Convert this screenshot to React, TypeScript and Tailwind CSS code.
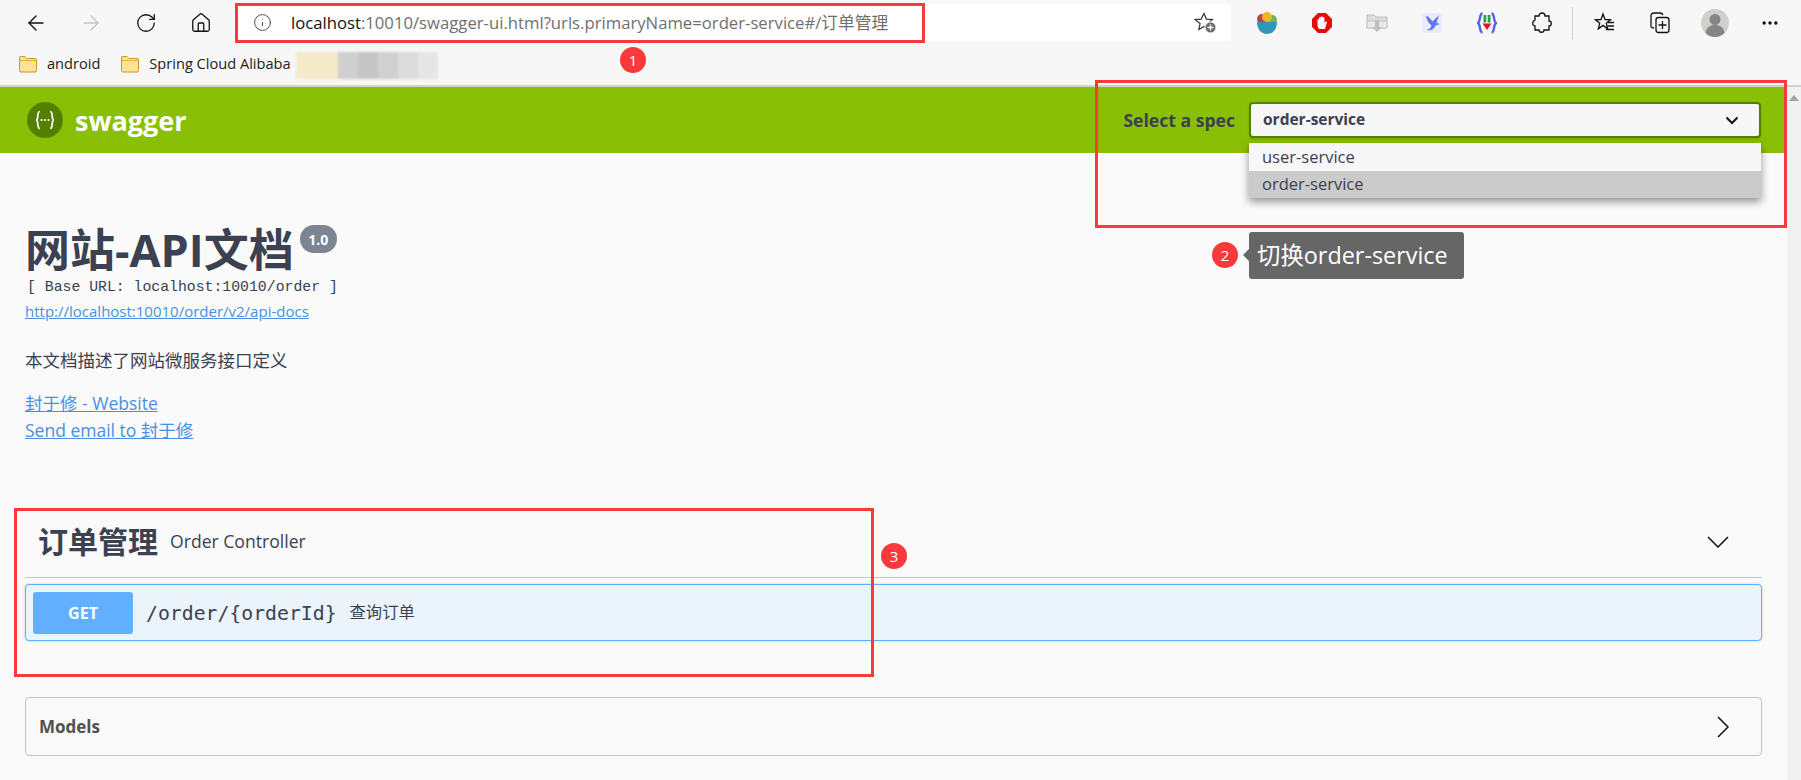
import { ArrowLeft, ArrowRight, RotateCw, Home, Info, MoreHorizontal } from "lucide-react";

const mono = "font-['Liberation_Mono','Noto_Sans_CJK_SC',monospace]";
const pathMono = "font-['DejaVu_Sans_Mono','Noto_Sans_CJK_SC',monospace]";

function BowlIcon() {
  return (
    <svg width="22" height="24" viewBox="0 0 22 24">
      <circle cx="6" cy="8" r="5" fill="#b5454f" />
      <circle cx="16" cy="9" r="5" fill="#6cb65a" />
      <circle cx="11" cy="6" r="5" fill="#f3b520" />
      <path d="M1 11h20c0 7-4 12-10 12S1 18 1 11z" fill="#2f97b8" />
    </svg>
  );
}

function StopIcon() {
  return (
    <svg width="22" height="22" viewBox="0 0 22 22">
      <path d="M7 1h8l6 6v8l-6 6H7l-6-6V7z" fill="#e60b0b" />
      <path d="M6.500 12V8c0-1.200 1.600-1.200 1.600 0V6c0-1.300 1.700-1.300 1.700 0v-.8c0-1.300 1.900-1.300 1.900 0V6c0-1.300 1.700-1.300 1.700 0v5l1-1.200c1-1 2 0 1.400 1L14 17H9c-1.600 0-2.500-2-2.500-5z" fill="#fff" />
    </svg>
  );
}

function FolderDownIcon() {
  return (
    <svg width="22" height="20" viewBox="0 0 22 20">
      <path d="M1 2h7l2 2h11v11H1z" fill="#dcdcdc" stroke="#bdbdbd" />
      <path d="M1 8h20v7H1z" fill="#e9e9e9" stroke="#c4c4c4" />
      <path d="M9 7h4v7h3l-5 5-5-5h3z" fill="#bfbfbf" />
    </svg>
  );
}

function BirdIcon() {
  return (
    <svg width="20" height="20" viewBox="0 0 20 20">
      <rect width="20" height="20" rx="2" fill="#e8ecfc" />
      <path d="M4 2.500c3 1.500 5 4 6.500 6l6.500-6.500-2.500 8 3.500 1-4.500 1.500C12 17 8 18 4.500 17c3-1 4.500-2.500 5-4.500C6.500 10 4.500 7 4 2.500z" fill="#5f78f2" />
    </svg>
  );
}

function BracesIcon() {
  return (
    <svg width="20" height="22" viewBox="0 0 20 22">
      <path d="M5.500 1.500C2 1.500 4 9 1 11c3 2 1 9.500 4.500 9.500M14.500 1.500c3.500 0 1.500 7.500 4.500 9.500-3 2-1 9.500-4.500 9.500" fill="none" stroke="#5560e8" strokeWidth="2.400" />
      <path d="M6.500 3h2.800v7.500H6.500zM10.700 3h2.800v7.500h-2.800z" fill="#22a34a" />
      <path d="M5.500 11.500h9L10 18z" fill="#e8102a" />
    </svg>
  );
}

function PuzzleIcon() {
  return (
    <svg width="20" height="22" viewBox="0 0 20 22" fill="none" stroke="#111" strokeWidth="1.300">
      <path d="M7 4c0-4 6-4 6 0h4v5c3 0 3 5 0 5v4h-5c0 3-5 3-5 0H3v-4c-3 0-3-5 0-6V4z" />
    </svg>
  );
}

function StarPlus() {
  return (
    <svg width="24" height="24" viewBox="0 0 24 24">
      <path d="M10 2.500l2.400 5.600 6 .5-4.500 4 1.300 6-5.200-3.100-5.200 3.100 1.300-6L1.100 8.600l6-.5z" fill="none" stroke="#333" strokeWidth="1.200" />
      <circle cx="16.500" cy="16.500" r="5.500" fill="#6b6b6b" stroke="#fff" />
      <path d="M16.500 13.500v6M13.500 16.500h6" stroke="#fff" strokeWidth="1.300" />
    </svg>
  );
}

function FavoritesIcon() {
  return (
    <svg width="22" height="22" viewBox="0 0 22 22" fill="none" stroke="#111" strokeWidth="1.300">
      <path d="M9 2l2 5.500 5.500.3-4.200 3.500 1.400 5.500L9 13.400l-4.700 3.400 1.400-5.500L1.500 7.800 7 7.500z" />
      <path d="M14 10.500h6M13.500 14h6.500M12 17.500h8" />
    </svg>
  );
}

function CollectionsIcon() {
  return (
    <svg width="22" height="24" viewBox="0 0 22 24" fill="none" stroke="#111" strokeWidth="1.300">
      <path d="M5 17H4a2 2 0 0 1-2-2V5c0-2 1-3 3-3h6c1.500 0 2.500.6 3 2" />
      <rect x="7" y="6.500" width="13" height="15" rx="2.500" />
      <path d="M13.500 10v8M9.500 14h8" />
    </svg>
  );
}

function Avatar() {
  return (
    <svg width="28" height="28" viewBox="0 0 28 28">
      <circle cx="14" cy="14" r="14" fill="#cfcfcb" />
      <circle cx="14" cy="10.500" r="5.500" fill="#858585" />
      <path d="M4.500 24c1-6 5-8 9.500-8s8.500 2 9.500 8c-2.500 2.500-6 4-9.500 4s-7-1.500-9.500-4z" fill="#858585" />
    </svg>
  );
}

function Folder() {
  return (
    <svg width="20" height="18" viewBox="0 0 20 18">
      <path d="M1.500 3a1.500 1.500 0 0 1 1.500-1.500h4l2 2h8A1.500 1.500 0 0 1 18.500 5v10.500A1.500 1.500 0 0 1 17 17H3a1.500 1.500 0 0 1-1.500-1.500z" fill="#fbe39a" stroke="#c9962a" />
      <path d="M2 5.500h16" stroke="#e2b13c" />
    </svg>
  );
}

function SwaggerLogo() {
  return (
    <svg width="36" height="36" viewBox="0 0 36 36">
      <circle cx="18" cy="18" r="18" fill="#547f00" />
      <path d="M13 9.500c-3 0-2 6-2.500 7-.3.600-1 1.500-1.500 1.500.5 0 1.200.9 1.500 1.500.5 1-.5 7 2.500 7M23 9.500c3 0 2 6 2.500 7 .3.600 1 1.500 1.500 1.500-.5 0-1.200.9-1.500 1.500-.5 1 .5 7-2.500 7" fill="none" stroke="#fff" strokeWidth="1.700" />
      <circle cx="14.500" cy="18" r="1.100" fill="#fff" />
      <circle cx="18" cy="18" r="1.100" fill="#fff" />
      <circle cx="21.500" cy="18" r="1.100" fill="#fff" />
    </svg>
  );
}

function Marker({ n, className }: { n: number; className: string }) {
  return (
    <div className={`absolute flex h-[26px] w-[26px] items-center justify-center rounded-full bg-[#fa3a3a] text-[15px] text-white ${className}`}>
      {n}
    </div>
  );
}

const slotClass = "flex w-[55px] shrink-0 items-center justify-center";

export default function App() {
  return (
    <div className="relative flex h-[780px] w-[1801px] flex-col overflow-hidden bg-[#fafafa] font-['Open_Sans','Noto_Sans_CJK_SC',sans-serif] text-[#3b4151]">
      {/* browser toolbar */}
      <div className="flex h-[45px] shrink-0 items-center bg-[#f7f7f7] pl-[8px]">
        <div className={slotClass}><ArrowLeft size={24} strokeWidth={1.4} color="#111" /></div>
        <div className={slotClass}><ArrowRight size={24} strokeWidth={1.4} color="#c4c4c4" /></div>
        <div className={slotClass}><RotateCw size={22} strokeWidth={1.4} color="#111" /></div>
        <div className={slotClass}><Home size={22} strokeWidth={1.4} color="#111" /></div>
        <div className="ml-[8px] flex h-[37px] w-[995px] shrink-0 items-center justify-between rounded-[4px] bg-white pl-[17px] pr-[13px]">
          <div className="flex items-center gap-[19px]">
            <Info size={19} strokeWidth={1.2} color="#444" />
            <span className="text-[16.700px] text-[#6f6f6f]">
              <span className="text-[#111]">localhost</span>:10010/swagger-ui.html?urls.primaryName=order-service#/订单管理
            </span>
          </div>
          <StarPlus />
        </div>
        <div className="ml-[8px] flex">
          <div className={slotClass}><BowlIcon /></div>
          <div className={slotClass}><StopIcon /></div>
          <div className={slotClass}><FolderDownIcon /></div>
          <div className={slotClass}><BirdIcon /></div>
          <div className={slotClass}><BracesIcon /></div>
          <div className={slotClass}><PuzzleIcon /></div>
        </div>
        <div className="ml-[3px] h-[32px] w-px bg-[#cfcfcf]" />
        <div className="ml-[4px] flex">
          <div className={slotClass}><FavoritesIcon /></div>
          <div className={slotClass}><CollectionsIcon /></div>
          <div className={slotClass}><Avatar /></div>
          <div className={slotClass}><MoreHorizontal size={20} color="#111" /></div>
        </div>
      </div>

      {/* bookmarks */}
      <div className="flex h-[42px] shrink-0 items-center border-b-2 border-[#d2d2d2] bg-[#f7f7f7] pb-[3px] pl-[18px] text-[14.600px] text-[#222]">
        <Folder />
        <span className="ml-[9px]">android</span>
        <div className="ml-[20px]"><Folder /></div>
        <span className="ml-[9px]">Spring Cloud Alibaba</span>
        <div className="ml-[5px] mt-[4px] flex h-[27px] items-stretch blur-[1px]">
          <div className="w-[42px] bg-[#f5e9c9]" />
          <div className="w-[20px] bg-[#cfcfcf]" />
          <div className="w-[20px] bg-[#c6c6c6]" />
          <div className="w-[20px] bg-[#d0d0d0]" />
          <div className="w-[20px] bg-[#dcdcdc]" />
          <div className="w-[20px] bg-[#e6e6e6]" />
        </div>
      </div>

      <div className="flex min-h-0 flex-1">
        <main className="min-w-0 flex-1">
          {/* swagger topbar */}
          <div className="flex h-[66px] items-center justify-between bg-[#89bf04] pl-[27px] pr-[26px]">
            <div className="flex items-center gap-[12px]">
              <SwaggerLogo />
              <span className="text-[27px] font-bold leading-none text-white">swagger</span>
            </div>
            <div className="flex items-center gap-[14px]">
              <span className="text-[17.600px] font-bold">Select a spec</span>
              <div className="flex h-[36px] w-[512px] items-center justify-between rounded-[4px] border-2 border-[#547f00] bg-[#f7f7f7] pl-[12px] pr-[20px] shadow-sm">
                <span className="text-[15.500px] font-bold">order-service</span>
                <svg width="14" height="9" viewBox="0 0 14 9" fill="none" stroke="#111" strokeWidth="2">
                  <path d="M1.500 1.500L7 7l5.500-5.500" />
                </svg>
              </div>
            </div>
          </div>

          <div className="px-[25px]">
            {/* info */}
            <div className="mt-[71px] flex h-[50px] items-center">
              <h1 className="text-[45px] font-bold leading-none">网站-API文档</h1>
              <span className="ml-[6px] -mt-[20px] flex h-[28px] w-[37px] items-center justify-center rounded-[14px] bg-[#7d8492] text-[14px] font-bold text-white">1.0</span>
            </div>
            <div className={`mt-[3px] h-[20px] pl-[2px] text-[14.800px] leading-[20px] ${mono}`}>[ Base URL: localhost:10010/order ]</div>
            <div className="mt-[3px] h-[22px] text-[15px] leading-[22px] text-[#4990e2] underline">http://localhost:10010/order/v2/api-docs</div>
            <p className="mt-[27px] h-[22px] text-[17.500px] leading-[22px]">本文档描述了网站微服务接口定义</p>
            <div className="mt-[19px] h-[27px] text-[17.500px] leading-[27px] text-[#4990e2] underline">封于修 - Website</div>
            <div className="h-[27px] text-[17.500px] leading-[27px] text-[#4990e2] underline">Send email to 封于修</div>

            {/* tag */}
            <div className="mt-[66px] flex h-[68px] items-center justify-between border-b-[1.500px] border-[#c8c8c8] pb-[4px] pl-[13px] pr-[33px]">
              <div className="flex items-center gap-[12px]">
                <span className="text-[30px] font-bold leading-none">订单管理</span>
                <span className="text-[17.600px]">Order Controller</span>
              </div>
              <svg width="22" height="12" viewBox="0 0 22 12" fill="none" stroke="#111" strokeWidth="1.500">
                <path d="M1 1l10 10L21 1" />
              </svg>
            </div>

            <div className="mt-[6px] flex h-[57px] items-center rounded-[4px] border-[1.500px] border-[#61affe] bg-[#ebf3fb] pl-[7px] shadow-[0_0_3px_rgba(0,0,0,0.19)]">
              <div className="flex h-[42px] w-[100px] items-center justify-center rounded-[3px] bg-[#61affe] text-[16px] font-bold text-white">GET</div>
              <span className={`ml-[13px] mt-[2px] text-[19.800px] ${pathMono}`}>/order/&#123;orderId&#125;</span>
              <span className="ml-[13px] text-[16.300px]">查询订单</span>
            </div>

            {/* models */}
            <div className="mt-[56px] flex h-[59px] items-center justify-between rounded-[4px] border-[1.500px] border-[#c4c4c4] pl-[13px] pr-[31px]">
              <span className="mt-[1px] text-[17px] font-bold text-[#505050]">Models</span>
              <svg width="13" height="22" viewBox="0 0 13 22" fill="none" stroke="#111" strokeWidth="1.500">
                <path d="M1 1l10 10L1 21" />
              </svg>
            </div>
          </div>
        </main>

        {/* scrollbar */}
        <div className="flex w-[14px] shrink-0 justify-center bg-[#f1f1f1] pt-[8px]">
          <div className="h-0 w-0 border-x-[5px] border-b-[6px] border-x-transparent border-b-[#a3a3a3]" />
        </div>
      </div>

      {/* open select menu */}
      <div className="absolute left-[1249px] top-[143px] w-[512px] text-[16.500px] shadow-[0_4px_8px_rgba(0,0,0,0.4)]">
        <div className="flex h-[28px] items-center bg-[#f7f7f7] pl-[13px]">user-service</div>
        <div className="flex h-[27px] items-center bg-[#cbcbcb] pl-[13px]">order-service</div>
      </div>

      {/* annotations */}
      <div className="absolute left-[235px] top-[3px] h-[40px] w-[690px] border-[3px] border-[#fa3a3a]" />
      <div className="absolute left-[1095px] top-[80px] h-[148px] w-[692px] border-[3px] border-[#fa3a3a]" />
      <div className="absolute left-[14px] top-[508px] h-[169px] w-[860px] border-[3px] border-[#fa3a3a]" />
      <Marker n={1} className="left-[620px] top-[47px]" />
      <Marker n={2} className="left-[1212px] top-[242px]" />
      <Marker n={3} className="left-[881px] top-[543px]" />
      <div className="absolute left-[1249px] top-[232px] flex h-[47px] w-[215px] items-center rounded-[3px] bg-[#666] pl-[8px] text-[23.400px] text-white">
        <span className="absolute -left-[6px] top-[17px] h-0 w-0 border-y-[6px] border-r-[6px] border-y-transparent border-r-[#666]" />
        切换order-service
      </div>
    </div>
  );
}
